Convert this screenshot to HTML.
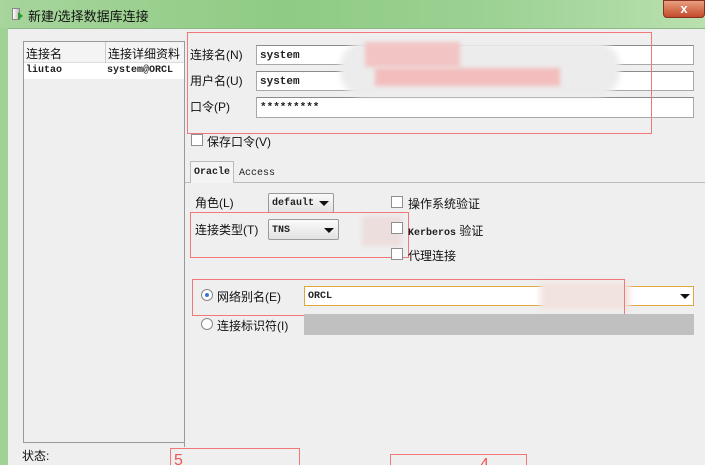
<!DOCTYPE html>
<html style="width:705px;height:465px;overflow:hidden"><head><meta charset="utf-8"><style>
*{margin:0;padding:0;box-sizing:border-box}
body{width:705px;height:465px;overflow:hidden;background:#efefef;position:relative;font-family:"Liberation Sans","Noto Sans CJK SC",sans-serif;font-size:12px;color:#111}
.a{position:absolute}
.mono{font-family:"Liberation Mono","DejaVu Sans Mono",monospace;font-size:11px;font-weight:bold;color:#222}
.inp{position:absolute;background:#fff;border:1px solid #a8a8a8;border-top-color:#8a8a8a}
.red{position:absolute;border:1.5px solid #f07878}
.cb{position:absolute;width:12px;height:12px;border:1px solid #8e8e8e;background:#fff}
.dd{position:absolute;border:1px solid #9a9a9a;border-radius:2px;background:linear-gradient(#fafafa,#e2e2e2)}
.arr{position:absolute;width:0;height:0;border-left:5px solid transparent;border-right:5px solid transparent;border-top:5px solid #111}
</style></head><body>
<div class="a" style="left:0;top:0;width:705px;height:28px;background:linear-gradient(90deg,#a7d59c,#8fcb84 40%,#9cd294 70%,#b9e0ae)"></div>
<div class="a" style="left:0;top:28px;width:8px;height:437px;background:#9fd294"></div>
<div class="a" style="left:8px;top:28px;width:697px;height:1px;background:#8fb889"></div>
<div class="a" style="left:12px;top:8px;width:8px;height:12px;background:linear-gradient(90deg,#fff,#bbb);border:1px solid #888"></div>
<div class="a" style="left:18px;top:12px;width:0;height:0;border-top:4px solid transparent;border-bottom:4px solid transparent;border-left:5px solid #2c9a2c"></div>
<div class="a" style="left:28px;top:6px;font-size:13px;color:#111">新建/选择数据库连接</div>
<div class="a" style="left:663px;top:0;width:42px;height:18px;background:linear-gradient(#e8a080,#c44a2a);border-radius:0 0 4px 4px;border:1px solid #8a3020;color:#fff;font-weight:bold;text-align:center;font-size:13px;line-height:15px">x</div>

<div class="a" style="left:23px;top:41px;width:162px;height:402px;border:1px solid #9a9a9a;background:#efefef"></div>
<div class="a" style="left:24px;top:42px;width:160px;height:21px;background:#f4f4f4;border-bottom:1px solid #ddd"></div>
<div class="a" style="left:105px;top:42px;width:1px;height:21px;background:#ccc"></div>
<div class="a" style="left:26px;top:45px">连接名</div>
<div class="a" style="left:108px;top:45px">连接详细资料</div>
<div class="a" style="left:24px;top:63px;width:160px;height:16px;background:#fff"></div>
<div class="a mono" style="left:26px;top:65px;font-size:10px">liutao</div>
<div class="a mono" style="left:107px;top:65px;font-size:10px">system@ORCL</div>
<div class="a" style="left:22px;top:447px">状态:</div>

<div class="a" style="left:190px;top:46px">连接名(N)</div>
<div class="a" style="left:190px;top:72px">用户名(U)</div>
<div class="a" style="left:190px;top:98px">口令(P)</div>
<div class="inp" style="left:256px;top:45px;width:438px;height:20px"></div>
<div class="inp" style="left:256px;top:71px;width:438px;height:20px"></div>
<div class="inp" style="left:256px;top:97px;width:438px;height:21px"></div>
<div class="a mono" style="left:260px;top:50px">system</div>
<div class="a mono" style="left:260px;top:76px">system</div>
<div class="a mono" style="left:260px;top:102px">*********</div>
<div class="a" style="left:340px;top:42px;width:280px;height:55px;background:#ececec;border-radius:25px;filter:blur(3px)"></div>
<div class="a" style="left:365px;top:42px;width:95px;height:25px;background:#f3c4c4;filter:blur(2px)"></div>
<div class="a" style="left:375px;top:68px;width:185px;height:18px;background:#f3bdbd;filter:blur(2px)"></div>
<div class="red" style="left:187px;top:32px;width:465px;height:102px"></div>

<div class="cb" style="left:191px;top:134px"></div>
<div class="a" style="left:207px;top:133px">保存口令(V)</div>

<div class="a" style="left:184px;top:182px;width:521px;height:1px;background:#bbb"></div>
<div class="a" style="left:184px;top:182px;width:1px;height:265px;background:#999"></div>
<div class="a" style="left:190px;top:161px;width:44px;height:22px;border:1px solid #bbb;border-bottom:none;background:#f4f4f4"></div>
<div class="a mono" style="left:194px;top:167px;font-size:10px">Oracle</div>
<div class="a mono" style="left:239px;top:168px;font-size:10px;font-weight:normal">Access</div>

<div class="a" style="left:195px;top:194px">角色(L)</div>
<div class="dd" style="left:268px;top:193px;width:66px;height:20px"></div>
<div class="a mono" style="left:272px;top:198px;font-size:10px">default</div>
<div class="arr" style="left:319px;top:201px"></div>
<div class="a" style="left:195px;top:221px">连接类型(T)</div>
<div class="dd" style="left:268px;top:219px;width:71px;height:21px"></div>
<div class="a mono" style="left:272px;top:225px;font-size:10px">TNS</div>
<div class="arr" style="left:324px;top:228px"></div>
<div class="a" style="left:362px;top:216px;width:40px;height:30px;background:#eddede;filter:blur(2px)"></div>
<div class="red" style="left:190px;top:212px;width:219px;height:46px"></div>
<div class="cb" style="left:391px;top:196px"></div>
<div class="a" style="left:408px;top:195px">操作系统验证</div>
<div class="cb" style="left:391px;top:222px"></div>
<div class="a" style="left:408px;top:222px"><span class="mono" style="font-size:10px">Kerberos</span> 验证</div>
<div class="cb" style="left:391px;top:248px"></div>
<div class="a" style="left:408px;top:247px">代理连接</div>

<div class="a" style="left:201px;top:289px;width:12px;height:12px;border-radius:50%;border:1px solid #888;background:#fff"></div>
<div class="a" style="left:205px;top:293px;width:4px;height:4px;border-radius:50%;background:#3b74d8"></div>
<div class="a" style="left:217px;top:288px">网络别名(E)</div>
<div class="a" style="left:304px;top:286px;width:390px;height:20px;border:1px solid #e2a640;background:#fff"></div>
<div class="a mono" style="left:308px;top:291px;font-size:10px">ORCL</div>
<div class="arr" style="left:680px;top:294px;border-top-width:5px"></div>
<div class="a" style="left:540px;top:282px;width:90px;height:28px;background:#f1e4e0;filter:blur(3px)"></div>
<div class="red" style="left:192px;top:279px;width:433px;height:37px"></div>
<div class="a" style="left:201px;top:318px;width:12px;height:12px;border-radius:50%;border:1px solid #888;background:#fff"></div>
<div class="a" style="left:217px;top:317px">连接标识符(I)</div>
<div class="a" style="left:304px;top:314px;width:390px;height:21px;background:#c0c0c0"></div>

<div class="red" style="left:170px;top:448px;width:130px;height:30px"></div>
<div class="a" style="left:174px;top:452px;color:#e55;font-size:16px">5</div>
<div class="red" style="left:390px;top:454px;width:137px;height:30px"></div>
<div class="a" style="left:480px;top:456px;color:#e55;font-size:16px">4</div>
</body></html>
